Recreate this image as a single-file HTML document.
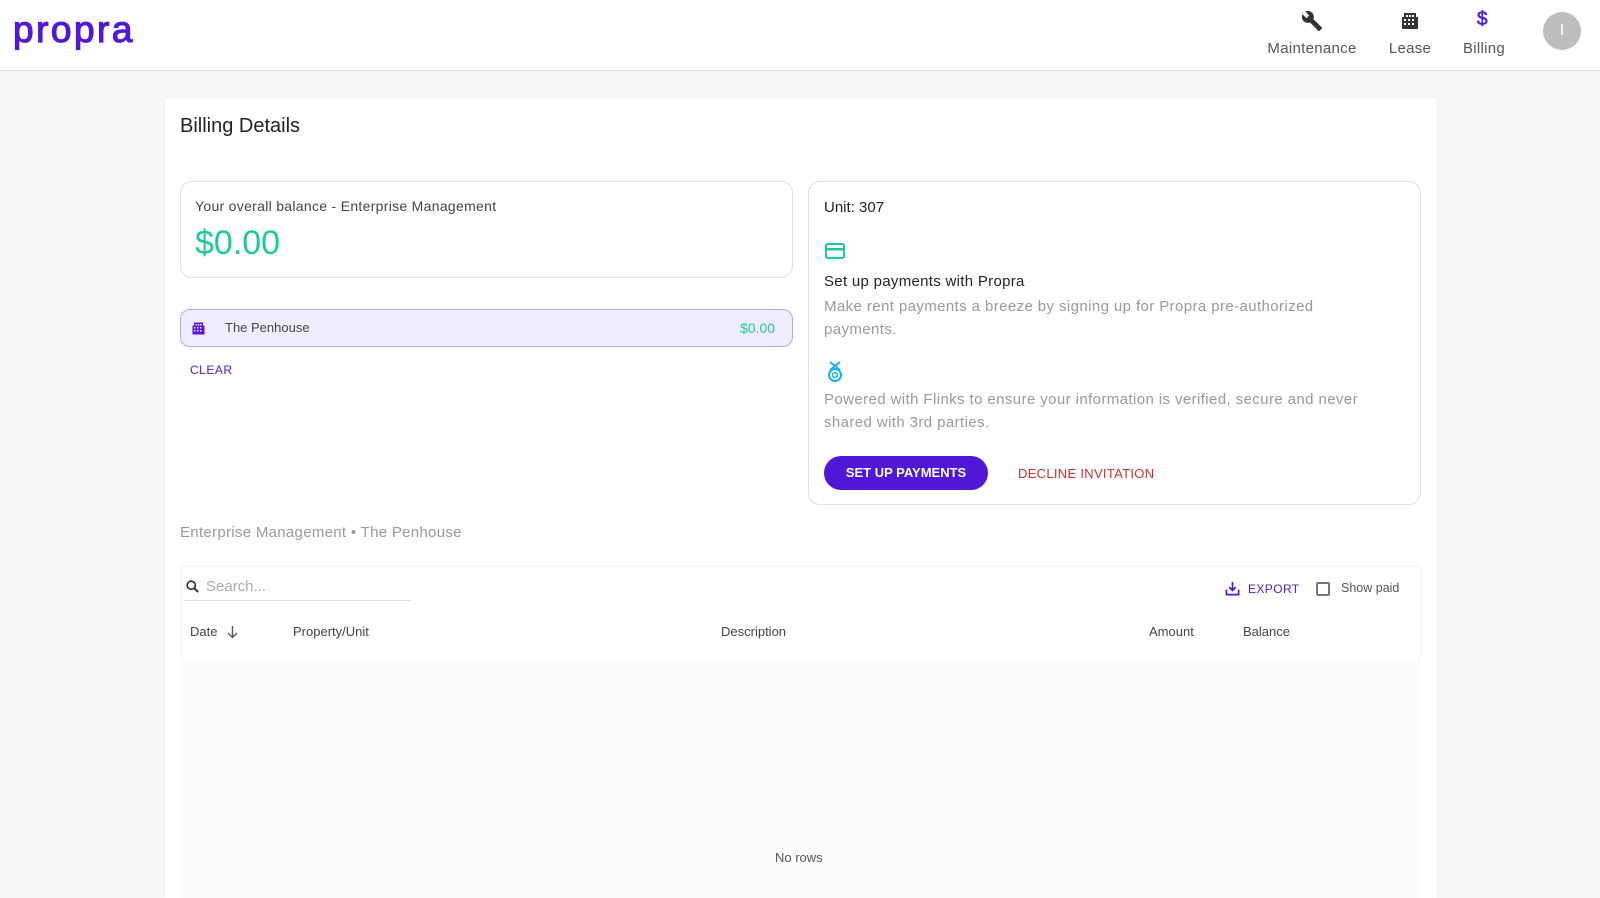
<!DOCTYPE html>
<html><head><meta charset="utf-8"><style>
*{box-sizing:border-box;margin:0;padding:0}
body{width:1600px;height:888px;overflow:hidden;background:#f7f7f7;font-family:"Liberation Sans",sans-serif;color:#333;position:relative}
.a{position:absolute;white-space:nowrap}
.hdr{position:absolute;left:0;top:0;width:1600px;height:71px;background:#fff;border-bottom:1px solid #ddd}
.nav{position:absolute;top:40px;font-size:15px;color:#555;transform:translateX(-50%);letter-spacing:.3px}
.card{position:absolute;left:165px;top:98px;width:1272px;height:800px;background:#fff;box-shadow:0 0 2px rgba(0,0,0,.08)}
.box{position:absolute;border:1px solid #e0e0e0;border-radius:12px;background:#fff}
.grey{color:#999}
</style></head><body>
<div class="hdr">
<div class="a" style="left:13px;top:9px;font-size:37px;color:#5018d6;letter-spacing:2.5px;-webkit-text-stroke:1.2px #5018d6">propra</div>
<svg class="a" style="left:1301px;top:10px" width="22" height="22" viewBox="0 0 24 24"><path fill="#333" d="M22.7 19l-9.1-9.1c.9-2.3.4-5-1.5-6.9-2-2-5-2.4-7.4-1.3L9 6 6 9 1.6 4.7C.4 7.1.9 10.1 2.9 12.1c1.9 1.9 4.6 2.4 6.9 1.5l9.1 9.1c.4.4 1 .4 1.4 0l2.3-2.3c.5-.4.5-1.1.1-1.4z"/></svg>
<svg class="a" style="left:1400px;top:11px" width="20" height="20" viewBox="0 0 20 20"><path fill="#333" d="M4 2h12v4h2v12H2V6h2z"/><g fill="#fff"><rect x="6" y="4" width="2" height="2"/><rect x="9" y="4" width="2" height="2"/><rect x="12" y="4" width="2" height="2"/><rect x="4" y="8" width="2" height="2"/><rect x="8" y="8" width="2" height="2"/><rect x="12" y="8" width="2" height="2"/><rect x="4" y="12" width="2" height="2"/><rect x="8" y="12" width="2" height="2"/><rect x="12" y="12" width="2" height="2"/></g></svg>
<div class="a" style="left:1477px;top:9px;font-size:19px;color:#5018d6;-webkit-text-stroke:.6px #5018d6">$</div>
<div class="nav" style="left:1312px">Maintenance</div>
<div class="nav" style="left:1410px">Lease</div>
<div class="nav" style="left:1484px">Billing</div>
<div class="a" style="left:1543px;top:12px;width:38px;height:38px;border-radius:50%;background:#bdbdbd;color:#fff;text-align:center;line-height:38px;font-size:16px">I</div>
</div>
<div class="card"></div>
<div class="a" style="left:180px;top:115px;font-size:20px;color:#222">Billing Details</div>
<div class="box" style="left:180px;top:181px;width:613px;height:97px"></div>
<div class="a" style="left:195px;top:198px;font-size:14px;color:#444;letter-spacing:.3px">Your overall balance - Enterprise Management</div>
<div class="a" style="left:195px;top:224px;font-size:34px;color:#1dc9a0">$0.00</div>
<div class="a" style="left:180px;top:309px;width:613px;height:38px;background:#f1ecfd;border:1px solid #b9a3ef;border-radius:10px"></div>
<svg class="a" style="left:191px;top:321px" width="15" height="15" viewBox="0 0 20 20"><path fill="#5018d6" d="M4 2h12v4h2v12H2V6h2z"/><g fill="#f1ecfd"><rect x="6" y="4" width="2" height="2"/><rect x="9" y="4" width="2" height="2"/><rect x="12" y="4" width="2" height="2"/><rect x="4" y="8" width="2" height="2"/><rect x="8" y="8" width="2" height="2"/><rect x="12" y="8" width="2" height="2"/><rect x="4" y="12" width="2" height="2"/><rect x="8" y="12" width="2" height="2"/><rect x="12" y="12" width="2" height="2"/></g></svg>
<div class="a" style="left:225px;top:320px;font-size:13px;color:#444">The Penhouse</div>
<div class="a" style="left:740px;top:320px;font-size:14px;color:#1dc9a0">$0.00</div>
<div class="a" style="left:190px;top:363px;font-size:12px;color:#5018d6;letter-spacing:.5px">CLEAR</div>
<div class="box" style="left:808px;top:181px;width:613px;height:324px"></div>
<div class="a" style="left:824px;top:199px;font-size:15px;color:#222">Unit: 307</div>
<svg class="a" style="left:825px;top:243px" width="20" height="16" viewBox="0 0 20 16"><rect x="1" y="1" width="18" height="14" rx="1.5" fill="none" stroke="#1dc9a0" stroke-width="2"/><rect x="1" y="5" width="18" height="2.5" fill="#1dc9a0"/></svg>
<div class="a" style="left:824px;top:273px;font-size:15px;color:#222;letter-spacing:.3px">Set up payments with Propra</div>
<div class="a grey" style="left:824px;top:295px;font-size:15px;line-height:23px;white-space:normal;width:530px;letter-spacing:.4px">Make rent payments a breeze by signing up for Propra pre-authorized payments.</div>
<svg class="a" style="left:826px;top:360px" width="18" height="22" viewBox="0 0 18 22"><path d="M4 2l10 8M14 2L4 10" stroke="#1ab3e6" stroke-width="2" fill="none"/><circle cx="9" cy="15" r="6" fill="none" stroke="#1ab3e6" stroke-width="2"/><circle cx="9" cy="15" r="2.5" fill="none" stroke="#1ab3e6" stroke-width="1.6"/></svg>
<div class="a grey" style="left:824px;top:388px;font-size:15px;line-height:23px;white-space:normal;width:575px;letter-spacing:.4px">Powered with Flinks to ensure your information is verified, secure and never shared with 3rd parties.</div>
<div class="a" style="left:824px;top:456px;width:164px;height:34px;border-radius:17px;background:#5018d6;color:#fff;font-size:13px;font-weight:bold;text-align:center;line-height:34px">SET UP PAYMENTS</div>
<div class="a" style="left:1018px;top:466px;font-size:13px;color:#d32f2f;letter-spacing:.3px">DECLINE INVITATION</div>
<div class="a grey" style="left:180px;top:524px;font-size:15px;letter-spacing:.3px">Enterprise Management • The Penhouse</div>
<div class="a" style="left:180px;top:566px;width:1241px;height:330px;background:#fff;border:1px solid #f3f3f3"></div>
<div class="a" style="left:180px;top:658px;width:1241px;height:240px;background:#fcfcfc"></div>
<svg class="a" style="left:185px;top:579px" width="15" height="15" viewBox="0 0 24 24"><circle cx="10" cy="10" r="6.5" fill="none" stroke="#222" stroke-width="2.5"/><path d="M15 15l6 6" stroke="#222" stroke-width="2.8"/></svg>
<div class="a" style="left:206px;top:578px;font-size:15px;color:#aaa">Search...</div>
<div class="a" style="left:184px;top:600px;width:227px;height:1px;background:#ddd"></div>
<div class="a" style="left:190px;top:624px;font-size:13px;color:#444">Date</div>
<svg class="a" style="left:226px;top:625px" width="13" height="14" viewBox="0 0 13 14"><path d="M6.5 1v11M2 8l4.5 4.5L11 8" stroke="#555" stroke-width="1.4" fill="none"/></svg>
<div class="a" style="left:293px;top:624px;font-size:13px;color:#444">Property/Unit</div>
<div class="a" style="left:721px;top:624px;font-size:13px;color:#444">Description</div>
<div class="a" style="left:1149px;top:624px;font-size:13px;color:#444">Amount</div>
<div class="a" style="left:1243px;top:624px;font-size:13px;color:#444">Balance</div>
<svg class="a" style="left:1225px;top:581px" width="15" height="15" viewBox="0 0 16 16"><path d="M8 1v9M4.5 6.5L8 10l3.5-3.5M1.5 9v5.5h13V9" stroke="#5018d6" stroke-width="1.8" fill="none"/></svg>
<div class="a" style="left:1248px;top:582px;font-size:12px;color:#5018d6;letter-spacing:.4px">EXPORT</div>
<div class="a" style="left:1316px;top:582px;width:14px;height:14px;border:2px solid #777;border-radius:2px"></div>
<div class="a" style="left:1341px;top:581px;font-size:12.5px;color:#555">Show paid</div>
<div class="a" style="left:775px;top:850px;font-size:13px;color:#555">No rows</div>
</body></html>
